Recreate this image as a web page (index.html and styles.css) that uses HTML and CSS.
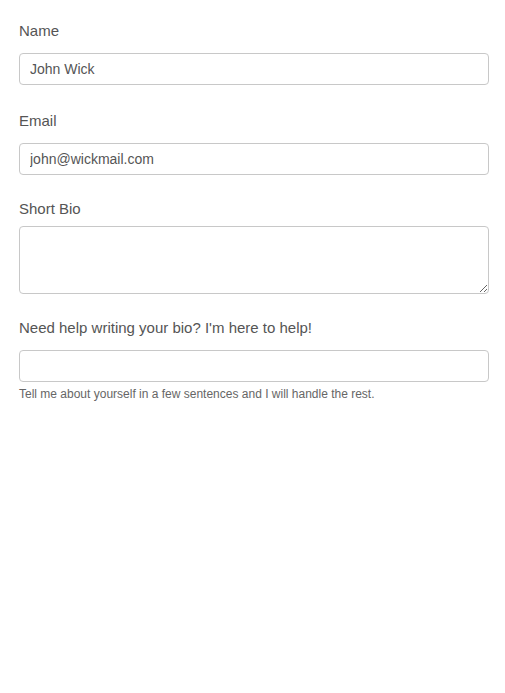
FILE: index.html
```html
<!DOCTYPE html>
<html>
<head>
<meta charset="utf-8">
<link rel="stylesheet" href="styles.css">
</head>
<body>
<form class="form">
  <div class="group g-name">
    <label class="label" for="name">Name</label>
    <input class="control" id="name" type="text" value="John Wick">
  </div>
  <div class="group g-email">
    <label class="label" for="email">Email</label>
    <input class="control" id="email" type="text" value="john@wickmail.com">
  </div>
  <div class="group g-bio">
    <label class="label" for="bio">Short Bio</label>
    <textarea class="control area" id="bio"></textarea>
  </div>
  <div class="group g-help">
    <label class="label" for="help">Need help writing your bio? I'm here to help!</label>
    <input class="control" id="help" type="text">
    <div class="hint">Tell me about yourself in a few sentences and I will handle the rest.</div>
  </div>
</form>
</body>
</html>
```

FILE: styles.css
```css
html, body {
  margin: 0;
  padding: 0;
  background: #ffffff;
}
body {
  font-family: "Liberation Sans", Arial, sans-serif;
  color: #555555;
}
.form {
  display: flex;
  flex-direction: column;
  padding: 21px 16px 0 19px;
  width: 470px;
}
.group {
  display: flex;
  flex-direction: column;
}
.label {
  font-size: 15px;
  line-height: 20px;
  color: #555555;
  margin-bottom: 12px;
}
.g-email { margin-top: 26px; }
.g-bio { margin-top: 24px; }
.g-bio .label { margin-bottom: 7px; }
.g-help { margin-top: 24px; }
.control {
  box-sizing: border-box;
  width: 470px;
  height: 32px;
  margin: 0;
  padding: 6px 10px;
  border: 1px solid #c8c8c8;
  border-radius: 4px;
  background: #ffffff;
  font-family: "Liberation Sans", Arial, sans-serif;
  font-size: 14px;
  color: #555555;
  outline: none;
}
.area {
  height: 68px;
  resize: vertical;
  display: block;
}
.hint {
  margin-top: 4px;
  font-size: 12px;
  line-height: 17px;
  color: #666666;
}
```
